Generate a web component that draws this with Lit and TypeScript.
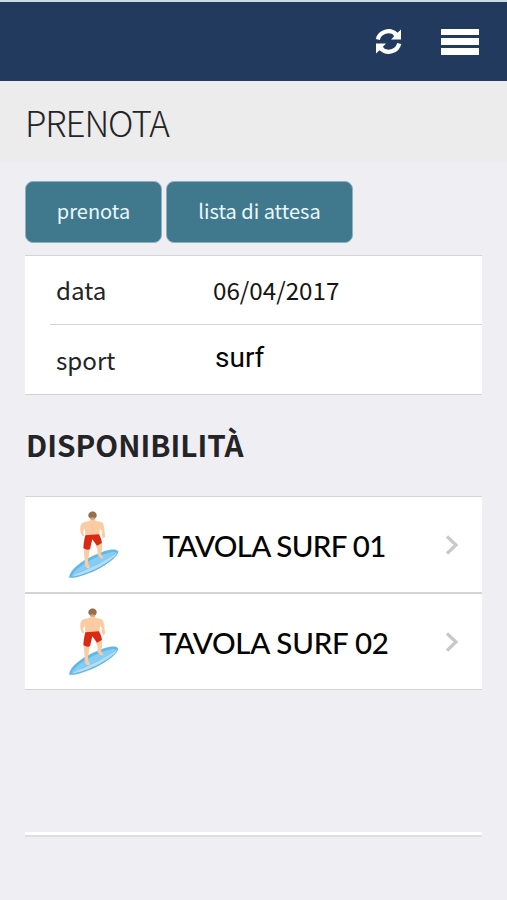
import { LitElement, html, css, svg } from "lit";
import { customElement, property } from "lit/decorators.js";

const surfer = svg`
  <path d="M60 263 C62 240 96 214 130 198 C165 181 199 172 207 183 C211 191 192 213 155 233 C118 253 78 266 60 263Z" fill="#62b7e6"/>
  <path d="M68 257 C78 239 108 218 136 205 C164 192 190 184 200 187 C188 203 158 217 131 229 C104 241 86 250 68 257Z" fill="#85cdf2"/>
  <path d="M68 259 C90 247 120 236 148 222 C170 211 190 199 204 187 C204 197 180 215 152 230 C120 247 88 258 68 259Z" fill="#b5ddf5"/>
  <path d="M104 174 L121 178 C121 190 119 199 117 211 L118 223 Q123 227 123 233 Q116 237 111 231 L107 222 C108 204 104 192 104 174Z" fill="#fbcba3"/>
  <path d="M140 164 L158 161 C161 174 158 185 156 193 Q162 199 163 204 Q157 208 152 202 L145 194 C149 182 143 174 140 164Z" fill="#fbcba3"/>
  <path d="M124 82 L138 82 L139 93 C150 94 160 96 162 101 C167 112 166 123 168 134 Q170 143 162 144 L158 135 L158 122 L153 116 L151 136 L109 138 L108 116 L102 124 L105 136 Q104 141 100 137 C94 130 93 120 94 112 C94 103 99 97 108 96 L123 92Z" fill="#fbcba3"/>
  <path d="M131 98 L131 119" stroke="#f5c197" stroke-width="1.5" fill="none"/>
  <path d="M109 136 L150 133 C154 141 158 149 159 159 L144 167 L130 148 L123 178 Q112 181 103 174 C104 160 106 147 109 136Z" fill="#d92a14"/>
  <ellipse cx="131" cy="78" rx="10" ry="11" fill="#d0a078"/>
  <path d="M118 79 C116 60 146 60 143 79 L139 84 Q131 79 122 84Z" fill="#94704f"/>`;

@customElement("board-row")
export class BoardRow extends LitElement {
  @property() label = "";
  static styles = css`
    :host { display: grid; grid-template-columns: 54px 1fr 14px; align-items: center;
      box-sizing: border-box; height: 95px; padding: 0 23px 0 41px; background: #fff; }
    .surfer { width: 54px; height: 72px; display: block; }
    .label { text-align: center; font: 500 29.5px/40px Lato, sans-serif; color: #050505;
      letter-spacing: var(--label-spacing, -0.25px); padding-top: 2px; margin-right: 17px; white-space: nowrap; }
    .chevron { width: 14px; height: 22px; display: block; }
  `;
  render() {
    return html`
      <svg class="surfer" viewBox="51 57 162 216">${surfer}</svg>
      <span class="label">${this.label}</span>
      <svg class="chevron" viewBox="0 0 14 22"><path d="M2 2.5 L11 11 L2 19.5" fill="none" stroke="#c9c9cb" stroke-width="3.2"/></svg>`;
  }
}

@customElement("app-root")
export class AppRoot extends LitElement {
  static styles = css`
    :host { display: flex; flex-direction: column; box-sizing: border-box; width: 100%; height: 900px;
      overflow: hidden; background: #efeef3; color: #242426;
      font-family: "Noto Sans CJK SC", "Noto Sans", sans-serif; }
    .bar { box-sizing: border-box; height: 81px; background: #223a5d; border-top: 2px solid #cbdbe3;
      display: flex; justify-content: flex-end; align-items: center; gap: 39px; padding-right: 28px; }
    .sync { width: 27px; height: 27px; }
    .menu { width: 38px; height: 26px; display: grid; gap: 3px; }
    .menu i { background: #fff; }
    .title { height: 83px; background: linear-gradient(#ececec 0 78px, #efeef3); padding-left: 25px;
      font-size: 35px; font-weight: 200; line-height: 81px; }
    .title span { display: inline-block; letter-spacing: -1.1px; }
    main { padding: 17px 25px 0 25px; }
    .actions { display: flex; gap: 4px; }
    .button { box-sizing: border-box; height: 62px; width: 138px; border-radius: 8px; background: #40788d;
      border: 1px solid #8fb0bf; color: #e9f8ff; text-align: center;
      font-size: 20px; line-height: 57px; white-space: nowrap; }
    .wide { width: 187px; }
    .button:first-child { width: 137px; }
    .card { margin-top: 12px; border-top: 1px solid #d5d5d9; border-bottom: 1px solid #d2d2d6; background: #fff; }
    .row { display: grid; grid-template-columns: 157px 1fr; height: 68px; line-height: 68px; font-size: 24.2px; margin-left: 25px; padding-left: 6px; }
    .row + .row { border-top: 1px solid #d6d6d9; height: 69px; line-height: 69px; }
    .value { color: #151515; }
    .sport { font: 400 28px/65px Roboto, sans-serif; color: #050505; padding-left: 2px; }
    h2 { margin: 29px 0 0; height: 44px; font-size: 29.7px; line-height: 42px; font-weight: 700; padding-left: 1px; }
    .boards { margin-top: 28px; border-top: 1px solid #d5d5d9; border-bottom: 1px solid #d5d5d9; }
    .boards board-row:first-child { --label-spacing: -0.7px; }
    .boards board-row + board-row { border-top: 2px solid #d3d3d5; height: 97px; }
    .rule { margin-top: 142px; height: 3px; background: #fff; border-bottom: 2px solid #dedee2; }
  `;
  render() {
    return html`
      <header class="bar">
        <svg class="sync" viewBox="0 0 27 27">
          <path d="M2.8 11.5 A10.8 10.3 0 0 1 21 6.2" fill="none" stroke="#fff" stroke-width="4.2"/>
          <path d="M26 1.5 V11.5 H16 L19 8.5 L17.5 5 L22.5 4.8Z" fill="#fff"/>
          <path d="M24.2 15.5 A10.8 10.3 0 0 1 6 20.8" fill="none" stroke="#fff" stroke-width="4.2"/>
          <path d="M1 25.5 V15.5 H11 L8 18.5 L9.5 22 L4.5 22.2Z" fill="#fff"/>
        </svg>
        <div class="menu"><i></i><i></i><i></i></div>
      </header>
      <div class="title"><span>PRENOTA</span></div>
      <main>
        <div class="actions">
          <div class="button">prenota</div>
          <div class="button wide">lista di attesa</div>
        </div>
        <section class="card">
          <div class="row"><span>data</span><span class="value">06/04/2017</span></div>
          <div class="row"><span>sport</span><span class="sport">surf</span></div>
        </section>
        <h2>DISPONIBILITÀ</h2>
        <section class="boards">
          <board-row label="TAVOLA SURF 01"></board-row>
          <board-row label="TAVOLA SURF 02"></board-row>
        </section>
        <div class="rule"></div>
      </main>`;
  }
}
